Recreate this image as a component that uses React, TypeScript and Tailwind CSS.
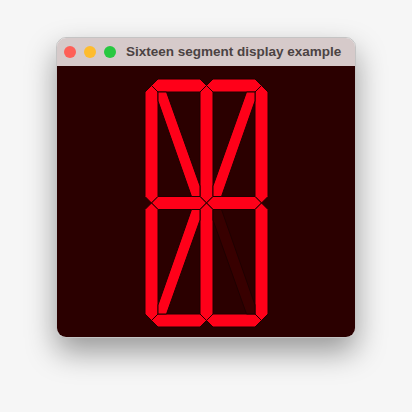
import React from 'react'

const ON = '#ff0019'
const OFF = '#380000'
const EDGE = '#1f0000'

// display geometry, in page pixels
const L = 145
const R = 268
const T = 78
const B = 326
const C = 206.5
const M = 202
const h = 6.5

type Seg = { id: string; pts: number[][]; on: boolean }

function hbar(x1: number, x2: number, y: number) {
  return [
    [x1, y],
    [x1 + h, y - h],
    [x2 - h, y - h],
    [x2, y],
    [x2 - h, y + h],
    [x1 + h, y + h],
  ]
}

function vbar(x: number, y1: number, y2: number) {
  return [
    [x, y1],
    [x + h, y1 + h],
    [x + h, y2 - h],
    [x, y2],
    [x - h, y2 - h],
    [x - h, y1 + h],
  ]
}

const segments: Seg[] = [
  { id: 'a1', pts: hbar(L + h, C, T + h), on: true },
  { id: 'a2', pts: hbar(C, R - h, T + h), on: true },
  { id: 'f', pts: vbar(L + h, T + h, M), on: true },
  { id: 'b', pts: vbar(R - h, T + h, M), on: true },
  { id: 'i', pts: vbar(C, T + h, M), on: true },
  { id: 'g1', pts: hbar(L + h, C, M), on: true },
  { id: 'g2', pts: hbar(C, R - h, M), on: true },
  { id: 'e', pts: vbar(L + h, M, B - h), on: true },
  { id: 'c', pts: vbar(R - h, M, B - h), on: true },
  { id: 'l', pts: vbar(C, M, B - h), on: true },
  { id: 'd1', pts: hbar(L + h, C, B - h), on: true },
  { id: 'd2', pts: hbar(C, R - h, B - h), on: true },
  // diagonals
  { id: 'h', pts: [[158, 91], [166.5, 91], [200, 185], [200, 195.5], [191.5, 195.5], [158, 100]], on: true },
  { id: 'j', pts: [[255, 91], [246.5, 91], [213, 185], [213, 195.5], [221.5, 195.5], [255, 100]], on: true },
  { id: 'k', pts: [[158, 313], [166.5, 313], [200, 219], [200, 208.5], [191.5, 208.5], [158, 304]], on: true },
  { id: 'm', pts: [[255, 313], [246.5, 313], [213, 219], [213, 208.5], [221.5, 208.5], [255, 304]], on: false },
]

function TrafficLight({ color }: { color: string }) {
  return <div className={`w-[12px] h-[12px] rounded-full ${color}`} />
}

export default function App() {
  return (
    <div className="w-[412px] h-[412px] bg-[#f6f6f6] pt-[37px] pl-[56px]">
      <div className="w-[300px] h-[301px] rounded-[10px] overflow-hidden flex flex-col border border-black/20 shadow-[0_14px_30px_rgba(0,0,0,0.38)]">
        {/* title bar */}
        <div className="h-[28px] bg-[#d6caca] flex items-center pl-[7px] gap-[8px] shrink-0">
          <TrafficLight color="bg-[#fe5f57]" />
          <TrafficLight color="bg-[#febc2e]" />
          <TrafficLight color="bg-[#28c840]" />
          <span
            className="ml-[2px] text-[13.5px] font-bold text-[#4b4343] whitespace-nowrap"
            style={{ fontFamily: '"Liberation Sans", Arial, sans-serif' }}
          >
            Sixteen segment display example
          </span>
        </div>

        {/* display */}
        <div className="flex-1 bg-[#2b0000]">
          <svg width="298" height="272" viewBox="57 65 298 272" className="block">
            {segments.map((s) => (
              <polygon
                key={s.id}
                points={s.pts.map((p) => p.join(',')).join(' ')}
                fill={s.on ? ON : OFF}
                stroke={EDGE}
                strokeWidth={1}
                strokeLinejoin="miter"
              />
            ))}
          </svg>
        </div>
      </div>
    </div>
  )
}
